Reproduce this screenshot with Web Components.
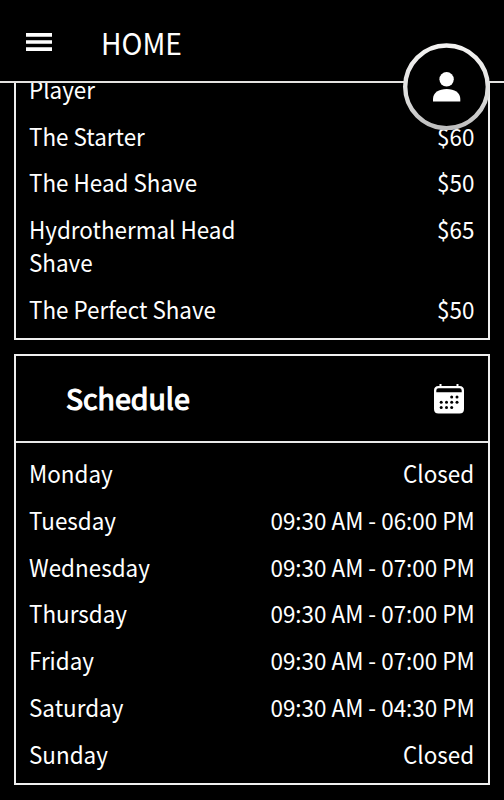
<!DOCTYPE html>
<html lang="en">
<head>
<meta charset="utf-8">
<title>Home</title>
<style>
html,body{margin:0;height:100%;background:#000;overflow:hidden}
body{color:#fff;font-family:"Noto Sans CJK SC","Noto Sans",sans-serif}
</style>
</head>
<body>
<shop-app></shop-app>
<script>
const define = (name, html) => customElements.define(name, class extends HTMLElement {
  constructor() {
    super();
    const t = document.createElement('template');
    t.innerHTML = html;
    this.attachShadow({mode: 'open'}).appendChild(t.content.cloneNode(true));
  }
});

define('menu-icon', `<style>:host{display:block;width:26px;height:18px}svg{display:block}</style>
<svg width="26" height="18" fill="#fff"><path d="M0 0h26v3.8H0zM0 7.2h26v3.6H0zM0 14.2h26v3.8H0z"/></svg>`);

define('calendar-icon', `<style>:host{display:block;width:30px;height:30px}svg{display:block}</style>
<svg width="30" height="30" viewBox="0 0 30 30">
<path fill="#fff" fill-rule="evenodd" d="M5.5 0H7.5V2H22.5V0H24.5V2H25.5Q30 2 30 6.5V25Q30 29.5 25.5 29.5H4.5Q0 29.5 0 25V6.500Q0 2 4.500 2H5.500ZM2.300 8.300H27.700V6.500Q27.700 4.200 25.500 4.200H4.500Q2.300 4.200 2.300 6.500Z"/>
<g><circle cx="17.700" cy="13.100" r="1.500"/><circle cx="23" cy="13.100" r="1.500"/>
<circle cx="7.200" cy="18.300" r="1.500"/><circle cx="12.500" cy="18.300" r="1.500"/><circle cx="17.700" cy="18.300" r="1.500"/><circle cx="23" cy="18.300" r="1.500"/>
<circle cx="7.200" cy="23.500" r="1.500"/><circle cx="12.500" cy="23.500" r="1.500"/><circle cx="17.700" cy="23.500" r="1.500"/></g></svg>`);

define('top-bar', `<style>
:host{display:flex;align-items:center;box-sizing:border-box;height:83px;flex:none;padding:3px 0 0 26px;border-bottom:2px solid #e4e2e0}
.title{font-size:29.5px;line-height:42px;margin-left:49px;padding-bottom:1px;transform:scaleX(.955);transform-origin:0 50%}
</style><menu-icon></menu-icon><div class="title"><slot></slot></div>`);

define('profile-button', `<style>
:host{display:block;position:absolute;left:403px;top:43px;width:87px;height:87px}
svg{display:block}
</style><svg width="87" height="87" viewBox="0 0 87 87">
<defs><linearGradient id="ring" x1="0" y1="0" x2="0" y2="1"><stop offset="0" stop-color="#f4f3f2"/><stop offset=".6" stop-color="#dededd"/><stop offset="1" stop-color="#bebebe"/></linearGradient></defs>
<circle cx="43.500" cy="43.800" r="41.300" fill="#000" stroke="url(#ring)" stroke-width="4.400"/>
<circle cx="43.600" cy="36.300" r="7.200" fill="#fff"/>
<path fill="#fff" d="M30 58.500V56C30 49.500 36 46 43.700 46S57.300 49.500 57.300 56V58.500Z"/></svg>`);

define('info-row', `<style>
:host{display:flex;justify-content:space-between;align-items:flex-start;font-size:23.7px;line-height:32.77px;min-height:32.77px}
.label{max-width:225px;transform:scaleX(.947);transform-origin:0 0}
.value{white-space:nowrap;transform:scaleX(.947);transform-origin:100% 0}
</style><div class="label"><slot></slot></div><div class="value"><slot name="value"></slot></div>`);

define('info-card', `<style>
:host{display:block;flex:none;border:2px solid #efefef}
.body{display:flex;flex-direction:column;gap:14px;padding:14.1px 13.5px 12.5px 12.8px}
</style><slot name="head"></slot><div class="body"><slot></slot></div>`);

define('card-heading', `<style>
:host{display:flex;align-items:center;justify-content:space-between;box-sizing:border-box;height:87px;padding:0 24px 0 49.8px;border-bottom:2px solid #e8e8e8}
.title{font-size:29px;line-height:42px;padding-bottom:4px;-webkit-text-stroke:1.2px #fff;transform:scaleX(.985);transform-origin:0 50%}
</style><div class="title"><slot></slot></div><calendar-icon></calendar-icon>`);

define('shop-app', `<style>
:host{position:relative;display:flex;flex-direction:column;height:800px;width:504px;background:#000;overflow:hidden}
main{flex:1;min-height:0;overflow:hidden;display:flex;flex-direction:column;justify-content:flex-end;gap:14px;padding:0 14px 15px}
.prices{border-top:0}
</style>
<top-bar>HOME</top-bar>
<main>
<info-card class="prices">
<info-row>Player</info-row>
<info-row>The Starter<span slot="value">$60</span></info-row>
<info-row>The Head Shave<span slot="value">$50</span></info-row>
<info-row>Hydrothermal Head Shave<span slot="value">$65</span></info-row>
<info-row>The Perfect Shave<span slot="value">$50</span></info-row>
</info-card>
<info-card>
<card-heading slot="head">Schedule</card-heading>
<info-row>Monday<span slot="value">Closed</span></info-row>
<info-row>Tuesday<span slot="value">09:30 AM - 06:00 PM</span></info-row>
<info-row>Wednesday<span slot="value">09:30 AM - 07:00 PM</span></info-row>
<info-row>Thursday<span slot="value">09:30 AM - 07:00 PM</span></info-row>
<info-row>Friday<span slot="value">09:30 AM - 07:00 PM</span></info-row>
<info-row>Saturday<span slot="value">09:30 AM - 04:30 PM</span></info-row>
<info-row>Sunday<span slot="value">Closed</span></info-row>
</info-card>
</main>
<profile-button></profile-button>`);
</script>
</body>
</html>
